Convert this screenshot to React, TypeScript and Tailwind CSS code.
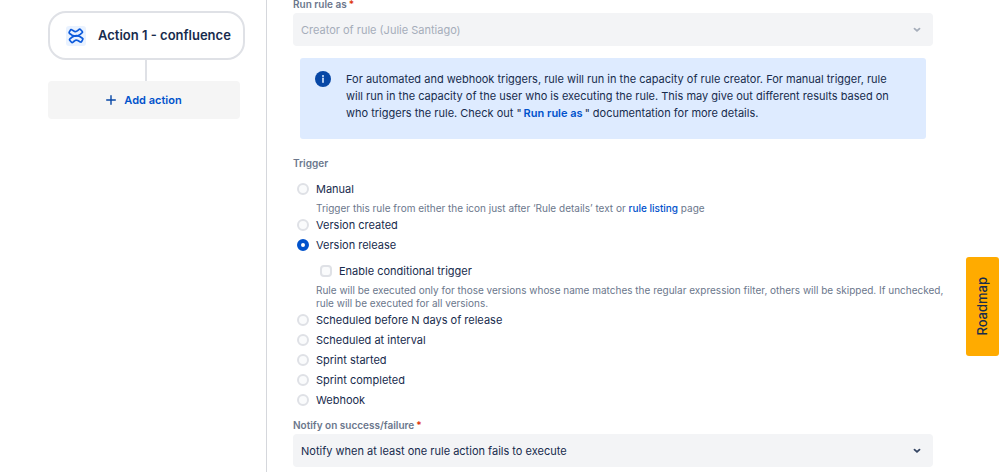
import { useState } from "react";

function ConfluenceIcon() {
  return (
    <svg viewBox="0 0 20 20" className="h-5 w-5 shrink-0" aria-hidden="true">
      <rect width="20" height="20" rx="3" fill="#E9F2FF" />
      <g
        fill="none"
        stroke="#0C5ADB"
        strokeWidth="1.7"
        strokeLinejoin="round"
        strokeLinecap="round"
      >
        <path d="M3.2 6.2 L4.4 4.1 Q4.9 3.3 5.7 3.8 L8.2 5.2 Q10 6.2 11.6 4.7 L13.2 3.3 Q13.9 2.8 14.5 3.5 L16.3 5.5 Q16.8 6.1 16.2 6.7 L14.2 8.4 Q10.2 11.4 6.2 9.2 L3.6 7.5 Q2.8 7 3.2 6.2 Z" />
        <path d="M16.8 13.4 L15.6 15.6 Q15.1 16.4 14.3 15.9 L11.8 14.5 Q10 13.5 8.4 15 L6.8 16.4 Q6.1 16.9 5.5 16.2 L3.7 14.2 Q3.2 13.6 3.8 13 L5.8 11.3 Q9.8 8.3 13.8 10.5 L16.4 12.2 Q17.2 12.7 16.8 13.4 Z" />
      </g>
    </svg>
  );
}

function Chevron() {
  return (
    <svg viewBox="0 0 8 6" className="h-1.5 w-2" aria-hidden="true">
      <path
        d="M1.5 1.6 L4 3.9 L6.5 1.6"
        fill="none"
        stroke="currentColor"
        strokeWidth="1.8"
        strokeLinecap="round"
      />
    </svg>
  );
}

type SelectFieldProps = {
  id: string;
  value: string;
  disabled?: boolean;
};

function SelectField({ id, value, disabled }: SelectFieldProps) {
  return (
    <div
      className={`relative ${disabled ? "text-[#a5adba]" : "text-[#172b4d]"}`}
    >
      <select
        id={id}
        disabled={disabled}
        className="block h-[33px] w-full appearance-none rounded-sm bg-[#f3f4f6] pt-px pr-8 pl-2 text-[11px] opacity-100"
      >
        <option>{value}</option>
      </select>
      <span
        className={`pointer-events-none absolute top-3.5 right-3 ${
          disabled ? "text-[#a5adba]" : "text-[#344563]"
        }`}
      >
        <Chevron />
      </span>
    </div>
  );
}

type TriggerOptionProps = {
  label: string;
  selected: string;
  onSelect: (label: string) => void;
};

function TriggerOption({ label, selected, onSelect }: TriggerOptionProps) {
  return (
    <label className="flex h-5 items-center gap-[7px] text-[11px]">
      <input
        type="radio"
        name="trigger"
        checked={selected === label}
        onChange={() => onSelect(label)}
        className="h-3 w-3 appearance-none rounded-full border-2 border-[#dfe1e6] bg-[#fafbfc] checked:border-4 checked:border-[#0052cc] checked:bg-white"
      />
      {label}
    </label>
  );
}

function App() {
  const [trigger, setTrigger] = useState("Version release");
  const [conditional, setConditional] = useState(false);

  return (
    <div className="flex min-h-screen bg-white font-['Inter',sans-serif] text-[#172b4d]">
      <aside className="w-[267px] shrink-0 border-r border-[#d5d7dc] pt-[11px] pr-[21px] pl-12">
        <button className="flex h-[49px] w-full items-center gap-3 rounded-[18px] border-2 border-[#dfe1e6] pl-4 text-[13px] font-semibold whitespace-nowrap">
          <ConfluenceIcon />
          Action 1 - confluence
        </button>
        <div className="ml-[97px] h-[21px] w-0.5 bg-[#dfe1e6]" />
        <button className="flex h-[38px] w-48 items-center justify-center gap-2 rounded-sm bg-[#f5f5f5] text-[11px] font-semibold text-[#0052cc]">
          <svg viewBox="0 0 10 10" className="h-2.5 w-2.5" aria-hidden="true">
            <path
              d="M5 0.7 V9.3 M0.7 5 H9.3"
              stroke="#0747a6"
              strokeWidth="1.4"
              strokeLinecap="round"
            />
          </svg>
          Add action
        </button>
      </aside>

      <main className="min-w-0 flex-1 pr-[66px] pb-[5px] pl-[26px]">
        <label
          htmlFor="run-as"
          className="mb-[5px] block text-[10px] leading-2 font-semibold text-[#6b778c]"
        >
          Run rule as<span className="ml-0.5 text-[#de350b]">*</span>
        </label>
        <SelectField id="run-as" value="Creator of rule (Julie Santiago)" disabled />

        <section className="mx-[7px] mt-3 flex gap-[15px] rounded-[3px] bg-[#deebff] pt-[13px] pr-5 pb-[17px] pl-[15px]">
          <svg viewBox="0 0 16 16" className="h-4 w-4 shrink-0" aria-hidden="true">
            <circle cx="8" cy="8" r="8" fill="#0747a6" />
            <circle cx="8" cy="4.9" r="1" fill="#deebff" />
            <path d="M8 7.2 V11.3" stroke="#deebff" strokeWidth="1.6" strokeLinecap="round" />
          </svg>
          <p className="text-[11px] leading-[17px]">
            For automated and webhook triggers, rule will run in the capacity of
            rule creator. For manual trigger, rule will run in the capacity of
            the user who is executing the rule. This may give out different
            results based on who triggers the rule. Check out "
            <a href="#run-rule-as" className="mx-0.5 font-semibold text-[#0052cc]">
              Run rule as
            </a>
            " documentation for more details.
          </p>
        </section>

        <fieldset className="mt-[18px]">
          <legend className="mb-2.5 text-[10px] leading-3 font-semibold text-[#6b778c]">
            Trigger
          </legend>
          <div className="pl-1">
            <TriggerOption label="Manual" selected={trigger} onSelect={setTrigger} />
            <p className="mt-[3px] ml-[19px] text-[10px] leading-[13px] text-[#6b778c]">
              Trigger this rule from either the icon just after ‘Rule details’
              text or{" "}
              <a href="#rules" className="font-medium text-[#0052cc]">
                rule listing
              </a>{" "}
              page
            </p>
            <TriggerOption label="Version created" selected={trigger} onSelect={setTrigger} />
            <TriggerOption label="Version release" selected={trigger} onSelect={setTrigger} />
            <label className="mt-1.5 ml-[23px] flex h-5 items-center gap-[7px] text-[11px]">
              <input
                type="checkbox"
                checked={conditional}
                onChange={(e) => setConditional(e.target.checked)}
                className="h-3 w-3 appearance-none rounded-sm border-2 border-[#dfe1e6] bg-[#fafbfc] checked:bg-[#0052cc]"
              />
              Enable conditional trigger
            </label>
            <p className="mt-[3px] -mr-6 ml-[19px] text-[10px] leading-[13px] text-[#6b778c]">
              Rule will be executed only for those versions whose name matches
              the regular expression filter, others will be skipped. If
              unchecked, rule will be executed for all versions.
            </p>
            <TriggerOption
              label="Scheduled before N days of release"
              selected={trigger}
              onSelect={setTrigger}
            />
            <TriggerOption label="Scheduled at interval" selected={trigger} onSelect={setTrigger} />
            <TriggerOption label="Sprint started" selected={trigger} onSelect={setTrigger} />
            <TriggerOption label="Sprint completed" selected={trigger} onSelect={setTrigger} />
            <TriggerOption label="Webhook" selected={trigger} onSelect={setTrigger} />
          </div>
        </fieldset>

        <label
          htmlFor="notify"
          className="mt-[9px] mb-[3px] block text-[10px] leading-3 font-semibold text-[#6b778c]"
        >
          Notify on success/failure<span className="ml-0.5 text-[#de350b]">*</span>
        </label>
        <SelectField
          id="notify"
          value="Notify when at least one rule action fails to execute"
        />
      </main>

      <button className="fixed top-[257px] right-0 flex h-[99px] w-[33px] items-center justify-center rounded-[3px] bg-[#ffab00] text-[13px] font-medium">
        <span className="rotate-180 [writing-mode:vertical-rl]">Roadmap</span>
      </button>
    </div>
  );
}

export default App;
